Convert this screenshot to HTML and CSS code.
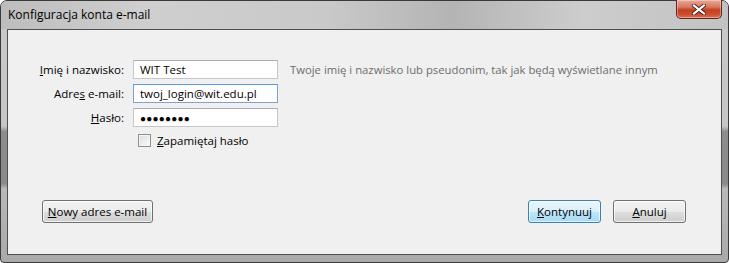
FILE: index.html
```html
<!DOCTYPE html>
<html lang="pl">
  <head>
    <meta charset="UTF-8" />
    <title>Konfiguracja konta e-mail</title>
    <link rel="stylesheet" href="styles.css">
  </head>
  <body>
    <div class="window">
      <div class="titlebar">
        <span class="titlebar__text">Konfiguracja konta e-mail</span>
        <button class="titlebar__close" aria-label="Zamknij">
          <svg width="14" height="11" viewBox="0 0 14 11">
            <path d="M2 1.5 L12 9.5 M12 1.5 L2 9.5" stroke="#4a2018" stroke-width="4" stroke-linecap="square" />
            <path d="M2 1.5 L12 9.5 M12 1.5 L2 9.5" stroke="#fff" stroke-width="2.2" stroke-linecap="square" />
          </svg>
        </button>
      </div>
      <div class="client">
        <div class="form">
          <label class="form__label"><u>I</u>mię i nazwisko:</label>
          <input class="form__input" type="text" value="WIT Test" />
          <span class="form__hint">Twoje imię i nazwisko lub pseudonim, tak jak będą wyświetlane innym</span>

          <label class="form__label">Adre<u>s</u> e-mail:</label>
          <input class="form__input form__input--focus" type="text" value="twoj_login@wit.edu.pl" />
          <span></span>

          <label class="form__label"><u>H</u>asło:</label>
          <div class="form__input form__password">●●●●●●●●</div>
          <span></span>

          <span></span>
          <label class="form__check"><span class="checkbox"></span><span><u>Z</u>apamiętaj hasło</span></label>
          <span></span>
        </div>
        <div class="actions">
          <button class="btn btn--wide"><u>N</u>owy adres e-mail</button>
          <div class="actions__right">
            <button class="btn btn--default"><u>K</u>ontynuuj</button>
            <button class="btn"><u>A</u>nuluj</button>
          </div>
        </div>
      </div>
    </div>
  </body>
</html>
```

FILE: styles.css
```css
* {
  margin: 0;
  padding: 0;
  box-sizing: border-box;
}

body {
  width: 729px;
  height: 263px;
  overflow: hidden;
  background: #fff;
  font-family: "Open Sans", "Noto Sans", sans-serif;
  font-size: 11.5px;
  color: #000;
}

.window {
  display: flex;
  flex-direction: column;
  width: 729px;
  height: 263px;
  border: 1px solid #3a3a3a;
  border-radius: 7px 7px 4px 4px;
  background: linear-gradient(to bottom, #c9c9c9 0%, #c6c6c6 48%, #8d8d8d 50%, #8a8a8a 70%, #b9b9b9 72%, #a9a9a9 100%);
  padding: 0 6px 7px;
}

.titlebar {
  display: flex;
  align-items: flex-start;
  justify-content: space-between;
  height: 28px;
  margin: 0 -6px;
  padding: 0 6px 0 7px;
  border-radius: 6px 6px 0 0;
  background: linear-gradient(to right, #bdbdbd 0%, #cfcfcf 20%, #c9c9c9 45%, #b4b4b4 62%, #cdcdcd 80%, #c2c2c2 100%);
}

.titlebar__text {
  margin-top: 6px;
  font-size: 12px;
  line-height: 16px;
}

.titlebar__close {
  display: flex;
  align-items: center;
  justify-content: center;
  width: 46px;
  height: 19px;
  margin-top: -1px;
  border: 1px solid #5a2a22;
  border-top: none;
  border-radius: 0 0 5px 5px;
  background: linear-gradient(to bottom, #e8a897 0%, #d8775f 40%, #c1401f 55%, #cd4d2f 80%, #e07058 100%);
  box-shadow: inset 0 0 0 1px rgba(255, 255, 255, 0.35);
}

.client {
  flex: 1;
  display: flex;
  flex-direction: column;
  justify-content: space-between;
  border: 1px solid #4f4f4f;
  background: #f0f0f0;
  padding: 30px 35px 31px 34px;
}

.form {
  display: grid;
  grid-template-columns: 82px 145px auto;
  column-gap: 9px;
  row-gap: 5px;
  align-items: center;
}

.form__label {
  text-align: right;
  white-space: nowrap;
  justify-self: end;
}

.form__input {
  height: 19px;
  border: 1px solid #c5c7cc;
  border-top-color: #abadb3;
  background: #fff;
  padding: 0 6px;
  font: inherit;
  color: #000;
  outline: none;
}

.form__input--focus {
  border-color: #7da2ce;
  border-top-color: #569de5;
}

.form__password {
  display: flex;
  align-items: center;
  font-size: 10px;
  letter-spacing: 0.2px;
}

.form__hint {
  margin-left: 3px;
  color: #6d6d6d;
  font-size: 11.3px;
  white-space: nowrap;
}

.form__check {
  display: flex;
  align-items: center;
  gap: 6px;
  padding-left: 5px;
  height: 16px;
}

.checkbox {
  width: 13px;
  height: 13px;
  border: 1px solid #8e8f8f;
  background: linear-gradient(135deg, #dcdcdc, #fbfbfb);
  box-shadow: inset 0 0 0 1px #f4f4f4;
}

.actions {
  display: flex;
  justify-content: space-between;
  align-items: center;
}

.actions__right {
  display: flex;
  gap: 12px;
}

.btn {
  height: 23px;
  width: 73px;
  border: 1px solid #707070;
  border-radius: 3px;
  background: linear-gradient(to bottom, #f2f2f2 0%, #ebebeb 50%, #dddddd 51%, #cfcfcf 100%);
  box-shadow: inset 0 0 0 1px rgba(255, 255, 255, 0.7);
  font: inherit;
  color: #000;
}

.btn--wide {
  width: 111px;
}

.btn--default {
  border-color: #3c7fb1;
  background: linear-gradient(to bottom, #eaf6fd 0%, #d9f0fc 50%, #bee6fd 51%, #a7d9f5 100%);
}
```
